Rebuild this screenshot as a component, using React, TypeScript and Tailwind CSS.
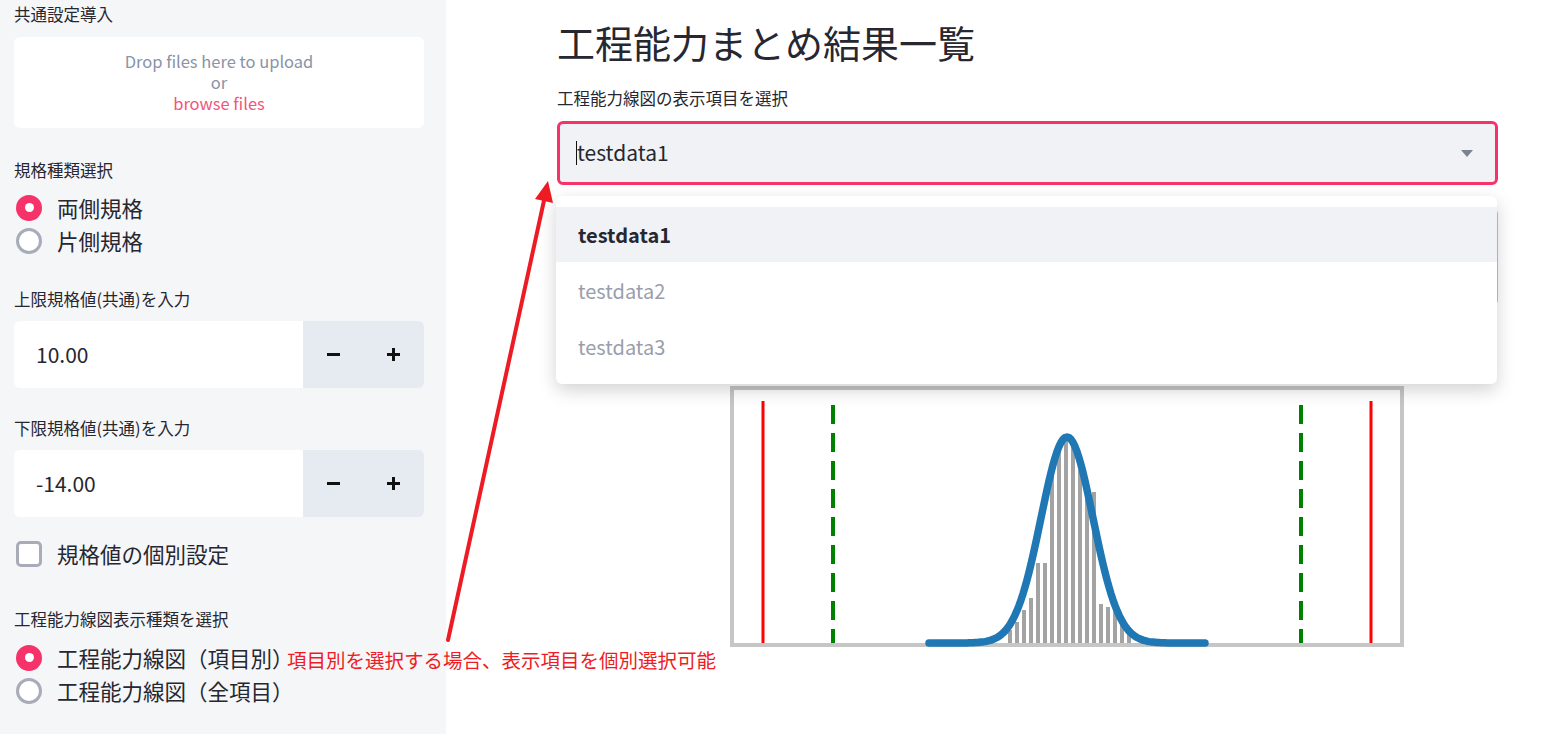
import React from "react";

const ink = "text-[#262730]";

function Radio({ checked, label }: { checked?: boolean; label: string }) {
  return (
    <div className="flex h-[33px] items-center gap-[15px] pl-[2px]">
      {checked ? (
        <span className="flex h-[26px] w-[26px] shrink-0 items-center justify-center rounded-full bg-[#f5336a]">
          <span className="h-[9px] w-[9px] rounded-full bg-white" />
        </span>
      ) : (
        <span className="h-[26px] w-[26px] shrink-0 rounded-full border-[3px] border-[#a7acb8] bg-white" />
      )}
      <span className={`whitespace-nowrap text-[21.5px] leading-[26px] ${ink}`}>{label}</span>
    </div>
  );
}

function NumberInput({ value }: { value: string }) {
  return (
    <div className="flex h-[67px] overflow-hidden rounded-md">
      <div className={`flex flex-1 items-center bg-white pl-[22px] text-[21px] ${ink}`}>{value}</div>
      <div className="flex w-[121px] bg-[#e6eaf1]">
        <button className="flex flex-1 items-center justify-center">
          <svg width="13" height="13" viewBox="0 0 13 13">
            <rect x="0" y="5" width="13" height="3" fill="#111" />
          </svg>
        </button>
        <button className="flex flex-1 items-center justify-center">
          <svg width="13" height="13" viewBox="0 0 13 13">
            <rect x="0" y="5" width="13" height="3" fill="#111" />
            <rect x="5" y="0" width="3" height="13" fill="#111" />
          </svg>
        </button>
      </div>
    </div>
  );
}

function Label({ children, className = "" }: { children: React.ReactNode; className?: string }) {
  return <p className={`text-[16.5px] leading-[20px] ${ink} ${className}`}>{children}</p>;
}

// histogram bars of the capability chart, [x, top] in page coordinates
const bars: [number, number][] = [
  [1010, 630], [1017, 622], [1024, 610], [1031, 598], [1038, 563], [1045, 563],
  [1052, 470], [1059, 442], [1066, 440], [1073, 445], [1080, 470], [1087, 490],
  [1094, 492], [1101, 604], [1108, 607], [1115, 612], [1122, 616], [1129, 634],
];

function CapabilityChart() {
  const pts: string[] = [];
  for (let x = 204; x <= 480; x += 2) {
    const y = 260 - 206 * Math.exp(-((x - 342) ** 2) / (2 * 26 * 26));
    pts.push(`${x},${y.toFixed(1)}`);
  }
  return (
    <svg width="685" height="270" viewBox="0 0 685 270">
      <rect x="7" y="5" width="670" height="257" fill="white" stroke="#c6c6c6" strokeWidth="4" />
      {bars.map(([x, top]) => (
        <rect key={x} x={x - 725 - 2} y={top - 383} width="4" height={643 - top} fill="#a3a3a3" />
      ))}
      <line x1="38" y1="18" x2="38" y2="260" stroke="#ff0000" strokeWidth="3" />
      <line x1="646" y1="18" x2="646" y2="260" stroke="#ff0000" strokeWidth="3" />
      <line x1="108" y1="22" x2="108" y2="260" stroke="#008000" strokeWidth="4" strokeDasharray="19 9" />
      <line x1="576" y1="22" x2="576" y2="260" stroke="#008000" strokeWidth="4" strokeDasharray="19 9" />
      <polyline points={pts.join(" ")} fill="none" stroke="#1f77b4" strokeWidth="7.5" strokeLinejoin="round" strokeLinecap="round" />
    </svg>
  );
}

export default function App() {
  return (
    <div className="relative flex h-[734px] w-[1562px] overflow-hidden bg-white font-['Noto_Sans_CJK_JP',sans-serif]">
      <aside className="w-[446px] shrink-0 bg-[#f5f6f8] pl-[14px] pr-[22px]">
        <Label className="pt-[4px]">共通設定導入</Label>
        <div className="mt-[13px] flex h-[91px] flex-col items-center justify-center rounded-md bg-white text-[16.5px] text-[#8a93a6]">
          <span className="block h-[21px] leading-[21px]">Drop files here to upload</span>
          <span className="block h-[21px] leading-[21px]">or</span>
          <span className="block h-[21px] leading-[21px] text-[#f2557a]">browse files</span>
        </div>

        <Label className="mt-[32px]">規格種類選択</Label>
        <div className="mt-[11px]">
          <Radio checked label="両側規格" />
          <Radio label="片側規格" />
        </div>

        <Label className="mt-[32px]">上限規格値(共通)を入力</Label>
        <div className="mt-[12px]">
          <NumberInput value="10.00" />
        </div>

        <Label className="mt-[30px]">下限規格値(共通)を入力</Label>
        <div className="mt-[12px]">
          <NumberInput value="-14.00" />
        </div>

        <div className="mt-[20px] flex h-[33px] items-center gap-[15px] pl-[2px]">
          <span className="h-[26px] w-[26px] rounded-[5px] border-[3px] border-[#a7acb8] bg-white" />
          <span className={`text-[21.5px] leading-[26px] ${ink}`}>規格値の個別設定</span>
        </div>

        <Label className="mt-[39px]">工程能力線図表示種類を選択</Label>
        <div className="mt-[12px]">
          <Radio checked label="工程能力線図（項目別）" />
          <Radio label="工程能力線図（全項目）" />
        </div>
      </aside>

      <main className="flex-1 pl-[111px] pr-[64px]">
        <h1 className={`pt-[18px] text-[38px] leading-[48px] ${ink}`}>工程能力まとめ結果一覧</h1>
        <Label className="mt-[22px]">工程能力線図の表示項目を選択</Label>

        <div className="relative mt-[13px]">
          <div className="flex h-[64px] items-center rounded-md border-[3px] border-[#f5336a] bg-[#f0f2f6] pl-[16px] pr-[22px]">
            <span className="h-[24px] w-px bg-[#111]" />
            <span className={`text-[21px] ${ink}`}>testdata1</span>
            <svg className="ml-auto" width="12" height="7" viewBox="0 0 12 7">
              <path d="M0 0h12L6 7z" fill="#7d8290" />
            </svg>
          </div>

          <div className="absolute left-[-1px] right-[1px] top-[75px] z-10 rounded-md bg-white pb-[9px] pt-[11px] shadow-[0_6px_18px_rgba(0,0,0,0.18)]">
            <div className={`flex h-[55px] items-center bg-[#f0f2f6] pl-[22px] text-[20px] font-bold ${ink}`}>testdata1</div>
            <div className="flex h-[57px] items-center pl-[22px] text-[20px] text-[#9a9eab]">testdata2</div>
            <div className="flex h-[56px] items-center pl-[22px] text-[20px] text-[#9a9eab]">testdata3</div>
          </div>
        </div>

        <div className="mt-[23px] h-[98px] rounded-md border border-[#9fd8af] bg-[#e8f7ec]" />

        <div className="ml-[168px] mt-[77px]">
          <CapabilityChart />
        </div>
      </main>

      <p className="absolute left-[287px] top-[647px] whitespace-nowrap text-[19.5px] leading-[26px] text-[#ee1c25]">
        項目別を選択する場合、表示項目を個別選択可能
      </p>

      <svg className="pointer-events-none absolute left-0 top-0 z-20" width="1562" height="734" viewBox="0 0 1562 734">
        <line x1="448" y1="640" x2="545" y2="196" stroke="#ed1c24" strokeWidth="4" strokeLinecap="round" />
        <polygon points="548,181 535,199 553,203" fill="#ed1c24" />
      </svg>
    </div>
  );
}
